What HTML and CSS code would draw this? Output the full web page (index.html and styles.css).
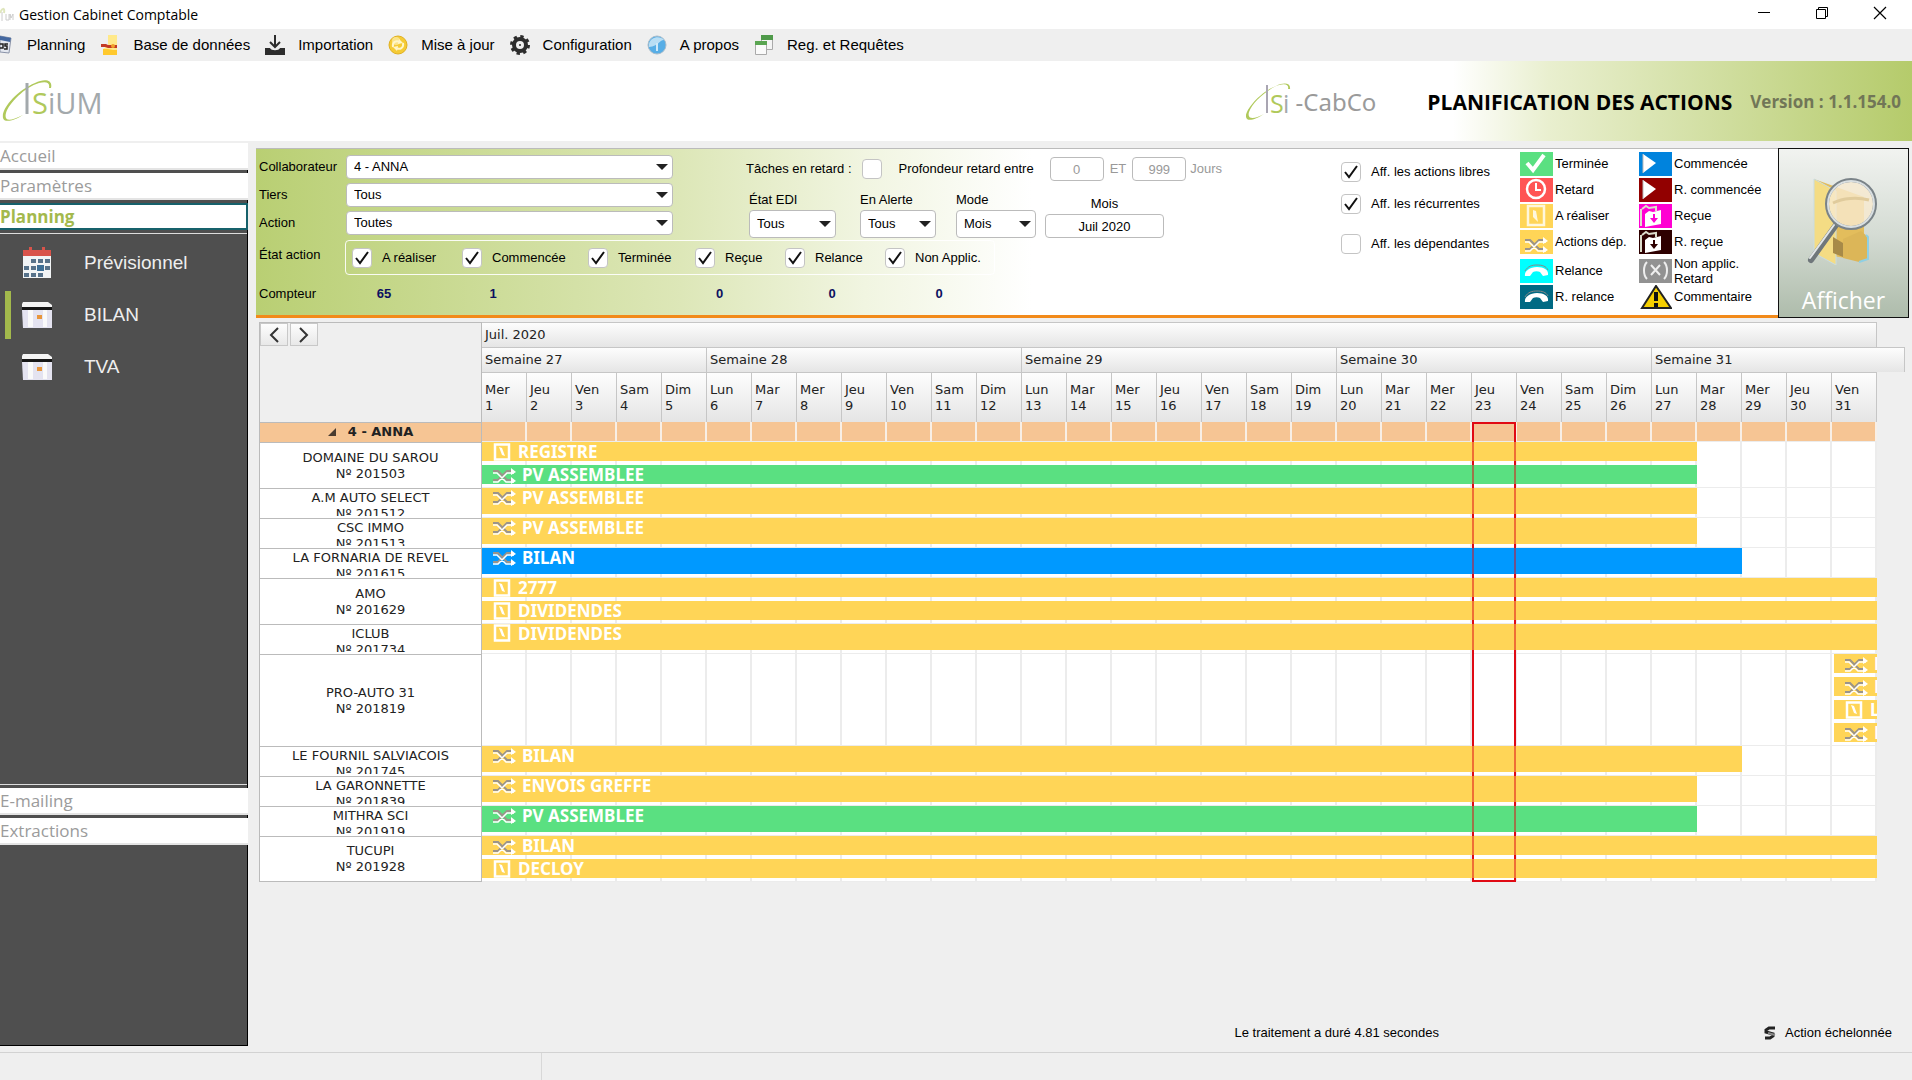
FILE: index.html
```html
<!DOCTYPE html>
<html lang="fr">
<head>
    <meta charset="UTF-8">
    <meta name="viewport" content="width=device-width, initial-scale=1.0">
    <title>Gestion Cabinet Comptable</title>
    <link rel="stylesheet" href="styles.css">
</head>
<body>
    <!-- Icônes partagées -->
    <svg class="sprite" aria-hidden="true">
        <symbol id="i-dep" viewBox="0 0 24 16">
            <path d="M1 3h5l9 9h7M1 12h5l9-9h7" fill="none" stroke="#9b948a" stroke-width="2"/>
            <path d="M1 5h4l9 9h8M1 14h5l9-9h7" fill="none" stroke="#fff" stroke-width="1.500"/>
            <path d="M19 0l5 4-5 3zM19 9l5 4-5 3z" fill="#fff"/>
        </symbol>
        <symbol id="i-todo" viewBox="0 0 20 18">
            <path d="M3 1.500h14v15H3z" fill="none" stroke="#fff" stroke-width="2.500"/>
            <path d="M7 4l3 1 3 8-3-1z" fill="#fff"/>
        </symbol>
        <symbol id="i-phone" viewBox="0 0 33 24">
            <path d="M5 17c-1-5 5-9 12-9s12 3 11 8l-5 1-3-4c-2-1-5-1-7 0l-3 4z" fill="#fff"/>
            <path d="M5 12c3-5 7-6 12-6s9 1 11 5" fill="none" stroke="#888" stroke-width="1"/>
        </symbol>
        <symbol id="i-play" viewBox="0 0 33 24">
            <path d="M4 2l13 9L4 21z" fill="#fff"/>
            <path d="M4 2v19" stroke="#bbb"/>
        </symbol>
        <symbol id="i-recu" viewBox="0 0 33 24">
            <path d="M2 22V5M3 5l4-3 3 2 7-1v4" fill="none" stroke="#ddc" stroke-width="2"/>
            <path d="M6 10l4-3 4 1 8-2v14l-16 3z" fill="#fff"/>
            <path d="M14 10v4h-3l4 5 4-5h-3v-4z" fill="currentColor"/>
        </symbol>
        <symbol id="i-box" viewBox="0 0 30 28">
            <path d="M1 1h25l4 3v2H0V3z" fill="#f4f4f4"/>
            <path d="M0 6h30v3H0z" fill="#161616"/>
            <path d="M0 9h30v18H1z" fill="#e4e3f0"/>
            <path d="M6 9h5v17H6zM21 9h4v17h-4z" fill="#fafafa"/>
            <path d="M15 14h5v4h-5z" fill="#e8963c"/>
        </symbol>
    </svg>

    <!-- Barre de titre -->
    <header class="titlebar">
        <svg class="titlebar-icon" width="14" height="20" viewBox="0 0 14 20" aria-hidden="true">
            <path d="M0 8c2-5 5-6 4 0" fill="none" stroke="#dfe6bd" stroke-width="2"/>
            <path d="M2 7v9M6 9v6h3V9M10 15V9l1 4 2-4v6" fill="none" stroke="#ccc" stroke-width="1"/>
        </svg>
        <h1 class="titlebar-text">Gestion Cabinet Comptable</h1>
        <div class="window-buttons">
            <button type="button" aria-label="Réduire"><svg width="14" height="14" viewBox="0 0 14 14"><path d="M1 6.500h12" stroke="#000"/></svg></button>
            <button type="button" aria-label="Restaurer"><svg width="14" height="14" viewBox="0 0 14 14"><path d="M1.500 3.500h9v9h-9zM3.500 3V1.500h9v9H11" fill="none" stroke="#000"/></svg></button>
            <button type="button" aria-label="Fermer"><svg width="14" height="14" viewBox="0 0 14 14"><path d="M1 1l12 12M13 1L1 13" stroke="#000" stroke-width="1.200"/></svg></button>
        </div>
    </header>

    <!-- Menu principal -->
    <nav class="menu">
        <a class="menu-item menu-first" href="#"><svg width="12" height="20" viewBox="0 0 12 20"><path d="M0 1l11 2-2 15-9-1z" fill="#e4e8f0" stroke="#8a93a8"/><path d="M0 1l11 2-1 4-10-2z" fill="#4468a0"/><path d="M0 9h3v4H0M8 9H5v2h2v3H4" fill="none" stroke="#222" stroke-width="1.500"/></svg>Planning</a>
        <a class="menu-item" href="#"><svg width="20" height="22" viewBox="0 0 20 22"><path d="M8 1h9v20H3v-6l5-4z" fill="#ffe98a"/><path d="M3 15h5l5 1h4v5H3z" fill="#ffc92e"/><path d="M1 10h5l2 1h9v3H8l-3-1H1z" fill="#c33a24"/><circle cx="13" cy="12" r="2" fill="#f0a02b"/></svg>Base de données</a>
        <a class="menu-item" href="#"><svg width="20" height="20" viewBox="0 0 20 20"><path d="M0 13h5c1 3 9 3 10 0h5v7H0z" fill="#2d2d2d"/><path d="M10 0v12M5 7l5 5 5-5" fill="none" stroke="#2d2d2d" stroke-width="2"/></svg>Importation</a>
        <a class="menu-item" href="#"><svg width="20" height="20" viewBox="0 0 20 20"><circle cx="10" cy="10" r="9" fill="#f5cb35" stroke="#e0b020"/><circle cx="8" cy="6" r="4" fill="#fbe48a"/><path d="M5 12c-1-5 3-7 7-5M15 8c1 5-3 7-7 5" fill="none" stroke="#fff6c8" stroke-width="2"/><path d="M11 4l4 4-5 1zM9 16l-4-4 5-1z" fill="#fff6c8"/></svg>Mise à jour</a>
        <a class="menu-item" href="#"><svg width="20" height="20" viewBox="0 0 20 20"><circle cx="10" cy="10" r="6" fill="none" stroke="#2d2d2d" stroke-width="4"/><circle cx="10" cy="10" r="8.500" fill="none" stroke="#2d2d2d" stroke-width="3" stroke-dasharray="3.300 3.380"/><circle cx="10" cy="10" r="1" fill="#2d2d2d"/></svg>Configuration</a>
        <a class="menu-item" href="#"><svg width="20" height="20" viewBox="0 0 20 20"><circle cx="10" cy="10" r="9" fill="#58aee6" stroke="#a8bccb"/><path d="M2 9C3 2 13 0 17 5 12 5 12 11 2 12z" fill="#b9def4"/><path d="M10 8v8" stroke="#cfe9f9" stroke-width="2"/></svg>A propos</a>
        <a class="menu-item" href="#"><svg width="20" height="20" viewBox="0 0 20 20"><path d="M7.500 1.500h11v13h-11z" fill="#f4f4f4" stroke="#aaa"/><path d="M7 0h12v5H7z" fill="#4f9a4a"/><path d="M1.500 6.500h11v13h-11z" fill="#fafafa" stroke="#aaa"/><path d="M1 6h12v4H1z" fill="#5aa551"/></svg>Reg. et Requêtes</a>
    </nav>

    <!-- Bandeau -->
    <div class="banner">
        <svg class="logo" width="104" height="44" viewBox="0 0 104 44" role="img" aria-label="Isium">
            <path d="M51 9C53 1 45-1 35 4 18 11 1 29 3 39c1 5 11 3 20-3C9 43 4 42 6 34 9 24 25 8 39 4c8-2 11 0 10 5z" fill="#b0c95b"/>
            <path d="M27 4v31" stroke="#a3a9ac" stroke-width="3"/>
            <text x="32" y="35" class="logo-letter logo-green">S</text>
            <text x="48" y="35" class="logo-letter">iUM</text>
        </svg>
        <div class="banner-right">
            <div class="product">
                <svg width="48" height="40" viewBox="0 0 48 40" role="img" aria-label="Isi">
                    <path d="M45 7c1-6-6-7-14-3C17 9 0 27 1 35c1 5 9 3 18-3C8 38 2 37 4 30 7 21 22 7 34 3c7-2 10 0 9 4z" fill="#b0c95b"/>
                    <path d="M22 3v28" stroke="#a9a5b2" stroke-width="2"/>
                    <text x="25" y="31" class="product-letter logo-green">S</text>
                    <text x="38" y="31" class="product-letter">i</text>
                </svg>
                <span class="product-name">-CabCo</span>
            </div>
            <h2 class="banner-title">PLANIFICATION DES ACTIONS</h2>
            <span class="version">Version : 1.1.154.0</span>
        </div>
    </div>

    <div class="layout">
        <!-- Menu latéral -->
        <aside class="sidebar">
            <a class="side-head" href="#">Accueil</a>
            <a class="side-head" href="#">Paramètres</a>
            <a class="side-head active" href="#">Planning</a>
            <nav class="side-list">
                <a class="side-item" href="#">
                    <svg width="30" height="32" viewBox="0 0 30 32"><path d="M1 6h28v25H1z" fill="#f2f4f5"/><path d="M1 3h6V0h3v3h10V0h3v3h6v6H1z" fill="#d9534a"/><path d="M9 12h5v4H9zM16 12h5v4h-5zM23 12h5v4h-5zM2 19h5v4H2zM9 19h5v4H9zM23 19h5v4h-5zM2 26h5v4H2zM9 26h5v4H9zM16 26h5v4h-5z" fill="#57728a"/><path d="M15 18h7v6h-7z" fill="#3d6f96"/></svg>
                    Prévisionnel
                </a>
                <a class="side-item selected" href="#"><svg width="30" height="28"><use href="#i-box"/></svg>BILAN</a>
                <a class="side-item" href="#"><svg width="30" height="28"><use href="#i-box"/></svg>TVA</a>
            </nav>
            <a class="side-head" href="#">E-mailing</a>
            <a class="side-head" href="#">Extractions</a>
            <div class="side-rest"></div>
        </aside>

        <main class="content">
            <!-- Filtres -->
            <section class="filters">
                <form class="filter-panel">
                    <div class="filter-form">
                        <div class="form-top">
                            <div class="fields">
                                <label for="collaborateur">Collaborateur</label>
                                <select id="collaborateur"><option>4 - ANNA</option></select>
                                <label for="tiers">Tiers</label>
                                <select id="tiers"><option>Tous</option></select>
                                <label for="action">Action</label>
                                <select id="action"><option>Toutes</option></select>
                            </div>
                            <div class="criteria">
                                <div class="late">
                                    <label for="retard">Tâches en retard :</label>
                                    <input type="checkbox" id="retard">
                                    <label class="depth" for="de">Profondeur retard entre</label>
                                    <input type="text" id="de" value="0" disabled>
                                    <label class="muted" for="a">ET</label>
                                    <input type="text" id="a" value="999" disabled>
                                    <span class="muted days">Jours</span>
                                </div>
                                <div class="modes">
                                    <div class="mode"><label for="edi">État EDI</label><select id="edi"><option>Tous</option></select></div>
                                    <div class="mode"><label for="alerte">En Alerte</label><select id="alerte"><option>Tous</option></select></div>
                                    <div class="mode"><label for="mode">Mode</label><select id="mode"><option>Mois</option></select></div>
                                    <div class="mode month"><label for="mois">Mois</label><input type="text" id="mois" value="Juil 2020"></div>
                                </div>
                            </div>
                        </div>
                        <div class="state-row">
                            <span class="state-title">État action</span>
                            <div class="states">
                                <label class="check"><input type="checkbox" checked>A réaliser</label>
                                <label class="check"><input type="checkbox" checked>Commencée</label>
                                <label class="check"><input type="checkbox" checked>Terminée</label>
                                <label class="check"><input type="checkbox" checked>Reçue</label>
                                <label class="check"><input type="checkbox" checked>Relance</label>
                                <label class="check"><input type="checkbox" checked>Non Applic.</label>
                            </div>
                        </div>
                        <div class="counters">
                            <span class="counter-title">Compteur</span>
                            <b>65</b><b>1</b><b></b><b>0</b><b>0</b><b>0</b>
                        </div>
                    </div>

                    <div class="display-options">
                        <label class="check"><input type="checkbox" checked>Aff. les actions libres</label>
                        <label class="check"><input type="checkbox" checked>Aff. les récurrentes</label>
                        <label class="check check-last"><input type="checkbox">Aff. les dépendantes</label>
                    </div>

                    <!-- Légende -->
                    <ul class="legend">
                        <li><svg class="tile green" viewBox="0 0 33 24"><path d="M7 11l6 7L24 3" fill="none" stroke="#fff" stroke-width="4"/></svg>Terminée</li>
                        <li><svg class="tile blue"><use href="#i-play"/></svg>Commencée</li>
                        <li><svg class="tile red" viewBox="0 0 33 24"><circle cx="16" cy="11" r="9" fill="none" stroke="#fff" stroke-width="2.500"/><path d="M16 5v7h5" fill="none" stroke="#fff" stroke-width="2"/></svg>Retard</li>
                        <li><svg class="tile darkred"><use href="#i-play"/></svg>R. commencée</li>
                        <li><svg class="tile yellow" viewBox="0 0 33 24"><path d="M8 2h16v19H8z" fill="none" stroke="#fff7dc" stroke-width="2.500"/><path d="M13 6l3 1 2 11-5-5z" fill="#fff7dc"/></svg>A réaliser</li>
                        <li><svg class="tile pink"><use href="#i-recu"/></svg>Reçue</li>
                        <li><svg class="tile yellow" viewBox="-4 -7 33 24"><use href="#i-dep" width="24" height="16"/></svg>Actions dép.</li>
                        <li><svg class="tile brown"><use href="#i-recu"/></svg>R. reçue</li>
                        <li><svg class="tile cyan"><use href="#i-phone"/></svg>Relance</li>
                        <li><svg class="tile grey" viewBox="0 0 33 24"><path d="M8 3C4 7 4 16 8 20M25 3c4 4 4 13 0 17M12 6l9 10M21 6l-9 10" fill="none" stroke="#eee" stroke-width="2"/></svg><span>Non applic.<br>Retard</span></li>
                        <li><svg class="tile teal"><use href="#i-phone"/></svg>R. relance</li>
                        <li><svg class="tile" viewBox="0 0 33 24"><path d="M3 23L17 1l15 22z" fill="#f5cf00" stroke="#222" stroke-width="2"/><path d="M17 7v9M17 18v4" stroke="#111" stroke-width="4"/></svg>Commentaire</li>
                    </ul>
                </form>
                <button type="button" class="show-button">
                    <svg width="78" height="88" viewBox="0 0 78 88" aria-hidden="true">
                        <path d="M9 2l50 18v64l-50-8z" fill="#e3bd5c"/>
                        <path d="M9 2l22 12v74L9 76z" fill="#f4dc84" stroke="#c9dce0"/>
                        <path d="M28 60l10 6v14l-10-4z" fill="#a78a48"/>
                        <path d="M38 62l18-8 7 6v22l-9 3-16-4z" fill="#dcb658"/>
                        <path d="M61 58l2 2v22l-9 3" fill="none" stroke="#8fd0e4" stroke-width="2"/>
                        <path d="M6 83l25-35" stroke="#6f777b" stroke-width="6" stroke-linecap="round"/>
                        <path d="M5 81l24-33" stroke="#e2e6e7" stroke-width="2" stroke-linecap="round"/>
                        <circle cx="46" cy="27" r="24" fill="#f8ead0" fill-opacity="0.800" stroke="#7a8388" stroke-width="4"/>
                        <circle cx="46" cy="27" r="23" fill="none" stroke="#d9dfe1" stroke-width="2"/>
                        <path d="M28 26c10-5 24-6 36-3" fill="none" stroke="#e0cb9c" stroke-width="3"/>
                    </svg>
                    <span>Afficher</span>
                </button>
            </section>

            <!-- Planning du mois -->
            <div class="planning">
                <table class="gantt">
                    <colgroup><col class="col-name"><col span="31"><col class="col-end"></colgroup>
                    <thead>
                        <tr class="row-month">
                            <td class="corner" rowspan="3">
                                <div class="pager">
                                    <button type="button" aria-label="Précédent"><svg width="10" height="16" viewBox="0 0 10 16"><path d="M9 1L2 8l7 7" fill="none" stroke="#333" stroke-width="2"/></svg></button>
                                    <button type="button" aria-label="Suivant"><svg width="10" height="16" viewBox="0 0 10 16"><path d="M1 1l7 7-7 7" fill="none" stroke="#333" stroke-width="2"/></svg></button>
                                </div>
                            </td>
                            <th colspan="31">Juil. 2020</th>
                            <td></td>
                        </tr>
                        <tr class="row-week">
                            <th colspan="5">Semaine 27</th>
                            <th colspan="7">Semaine 28</th>
                            <th colspan="7">Semaine 29</th>
                            <th colspan="7">Semaine 30</th>
                            <th colspan="6">Semaine 31</th>
                        </tr>
                        <tr class="row-day">
                            <th>Mer<br>1</th><th>Jeu<br>2</th><th>Ven<br>3</th><th>Sam<br>4</th><th>Dim<br>5</th>
                            <th>Lun<br>6</th><th>Mar<br>7</th><th>Mer<br>8</th><th>Jeu<br>9</th><th>Ven<br>10</th><th>Sam<br>11</th><th>Dim<br>12</th>
                            <th>Lun<br>13</th><th>Mar<br>14</th><th>Mer<br>15</th><th>Jeu<br>16</th><th>Ven<br>17</th><th>Sam<br>18</th><th>Dim<br>19</th>
                            <th>Lun<br>20</th><th>Mar<br>21</th><th>Mer<br>22</th><th>Jeu<br>23</th><th>Ven<br>24</th><th>Sam<br>25</th><th>Dim<br>26</th>
                            <th>Lun<br>27</th><th>Mar<br>28</th><th>Mer<br>29</th><th>Jeu<br>30</th><th>Ven<br>31</th>
                            <td></td>
                        </tr>
                    </thead>
                    <tbody>
                        <tr class="group">
                            <th><svg width="8" height="8" viewBox="0 0 8 8"><path d="M8 0v8H0z" fill="#4a3c30"/></svg>4 - ANNA</th>
                            <td class="track" colspan="31"></td>
                        </tr>
                        <tr>
                            <th><div class="name">DOMAINE DU SAROU<br>Nº 201503</div></th>
                            <td class="track" colspan="31">
                                <div class="bar todo" style="width: calc(100% * 27 / 31)"><svg class="ico-todo"><use href="#i-todo"/></svg>REGISTRE</div>
                                <div class="bar done" style="width: calc(100% * 27 / 31)"><svg class="ico-dep"><use href="#i-dep"/></svg>PV ASSEMBLEE</div>
                            </td>
                        </tr>
                        <tr class="single">
                            <th><div class="name">A.M AUTO SELECT<br>Nº 201512</div></th>
                            <td class="track" colspan="31"><div class="bar todo" style="width: calc(100% * 27 / 31)"><svg class="ico-dep"><use href="#i-dep"/></svg>PV ASSEMBLEE</div></td>
                        </tr>
                        <tr class="single">
                            <th><div class="name">CSC IMMO<br>Nº 201513</div></th>
                            <td class="track" colspan="31"><div class="bar todo" style="width: calc(100% * 27 / 31)"><svg class="ico-dep"><use href="#i-dep"/></svg>PV ASSEMBLEE</div></td>
                        </tr>
                        <tr class="single">
                            <th><div class="name">LA FORNARIA DE REVEL<br>Nº 201615</div></th>
                            <td class="track" colspan="31"><div class="bar started" style="width: calc(100% * 28 / 31)"><svg class="ico-dep"><use href="#i-dep"/></svg>BILAN</div></td>
                        </tr>
                        <tr>
                            <th><div class="name">AMO<br>Nº 201629</div></th>
                            <td class="track" colspan="31">
                                <div class="bar todo"><svg class="ico-todo"><use href="#i-todo"/></svg>2777</div>
                                <div class="bar todo"><svg class="ico-todo"><use href="#i-todo"/></svg>DIVIDENDES</div>
                            </td>
                        </tr>
                        <tr class="single">
                            <th><div class="name">ICLUB<br>Nº 201734</div></th>
                            <td class="track" colspan="31"><div class="bar todo"><svg class="ico-todo"><use href="#i-todo"/></svg>DIVIDENDES</div></td>
                        </tr>
                        <tr>
                            <th><div class="name">PRO-AUTO 31<br>Nº 201819</div></th>
                            <td class="track" colspan="31">
                                <div class="bar todo clipped" style="margin-left: calc(100% * 30 / 31 + 2px)"><svg class="ico-dep"><use href="#i-dep"/></svg>P</div>
                                <div class="bar todo clipped" style="margin-left: calc(100% * 30 / 31 + 2px)"><svg class="ico-dep"><use href="#i-dep"/></svg>E</div>
                                <div class="bar todo clipped" style="margin-left: calc(100% * 30 / 31 + 2px)"><svg class="ico-todo"><use href="#i-todo"/></svg>L</div>
                                <div class="bar todo clipped" style="margin-left: calc(100% * 30 / 31 + 2px)"><svg class="ico-dep"><use href="#i-dep"/></svg>E</div>
                            </td>
                        </tr>
                        <tr class="single">
                            <th><div class="name">LE FOURNIL SALVIACOIS<br>Nº 201745</div></th>
                            <td class="track" colspan="31"><div class="bar todo" style="width: calc(100% * 28 / 31)"><svg class="ico-dep"><use href="#i-dep"/></svg>BILAN</div></td>
                        </tr>
                        <tr class="single">
                            <th><div class="name">LA GARONNETTE<br>Nº 201839</div></th>
                            <td class="track" colspan="31"><div class="bar todo" style="width: calc(100% * 27 / 31)"><svg class="ico-dep"><use href="#i-dep"/></svg>ENVOIS GREFFE</div></td>
                        </tr>
                        <tr class="single">
                            <th><div class="name">MITHRA SCI<br>Nº 201919</div></th>
                            <td class="track" colspan="31"><div class="bar done" style="width: calc(100% * 27 / 31)"><svg class="ico-dep"><use href="#i-dep"/></svg>PV ASSEMBLEE</div></td>
                        </tr>
                        <tr>
                            <th><div class="name">TUCUPI<br>Nº 201928</div></th>
                            <td class="track" colspan="31">
                                <div class="bar todo"><svg class="ico-dep"><use href="#i-dep"/></svg>BILAN</div>
                                <div class="bar todo"><svg class="ico-todo"><use href="#i-todo"/></svg>DECLOY</div>
                            </td>
                        </tr>
                    </tbody>
                </table>
            </div>

            <div class="content-footer">
                <span class="duration">Le traitement a duré 4.81 secondes</span>
                <span class="staggered">
                    <svg width="12" height="14" viewBox="0 0 12 14" aria-hidden="true"><path d="M11 2H5L2 4v2l7 2v2l-3 2H1" fill="none" stroke="#222" stroke-width="3"/><path d="M4 7l7 2" stroke="#888" stroke-width="2"/></svg>
                    Action échelonnée
                </span>
            </div>
        </main>
    </div>

    <footer class="statusbar"><div class="status-cell"></div></footer>
</body>
</html>
```
FILE: styles.css
```css
*,
*::before,
*::after {
    box-sizing: border-box;
}

body {
    margin: 0;
    min-height: 100vh;
    display: flex;
    flex-direction: column;
    background-color: #efefef;
    color: #000;
    font-family: "Liberation Sans", Arial, sans-serif;
    font-size: 13px;
    line-height: 16px;
}

a {
    color: inherit;
    text-decoration: none;
}

button, input, select {
    font: inherit;
    color: inherit;
    margin: 0;
}

svg {
    flex-shrink: 0;
}

.sprite {
    display: none;
}

/* Barre de titre */
.titlebar {
    display: flex;
    align-items: center;
    height: 29px;
    background-color: #fff;
}

.titlebar-text {
    margin: 0 0 0 5px;
    font-family: "Open Sans", sans-serif;
    font-size: 14px;
    font-weight: normal;
}

.window-buttons {
    display: flex;
    margin-left: auto;
    padding-right: 3px;
}

.window-buttons button {
    width: 58px;
    height: 29px;
    padding: 0;
    border: none;
    background: none;
}

/* Menu */
.menu {
    display: flex;
    align-items: center;
    gap: 15px;
    height: 32px;
    font-size: 15px;
}

.menu-item {
    display: flex;
    align-items: center;
    gap: 13px;
}

.menu-first {
    gap: 15px;
}

/* Bandeau */
.banner {
    display: flex;
    align-items: center;
    justify-content: space-between;
    height: 80px;
    background: linear-gradient(to right, #fff 76%, #e9efcf 81%, #b5cb6b 100%);
}

.logo-letter,
.product-letter {
    font-family: "Open Sans", sans-serif;
    font-size: 29px;
    fill: #a3a9ac;
}

.product-letter {
    font-size: 25px;
}

.logo-green {
    fill: #b0c95b;
}

.banner-right {
    display: flex;
    align-items: center;
    padding: 2px 11px 0 0;
    font-family: "Open Sans", sans-serif;
}

.product {
    display: flex;
    align-items: center;
    gap: 3px;
}

.product-name {
    color: #9a9a9a;
    font-family: "Noto Sans", sans-serif;
    font-size: 24px;
}

.banner-title {
    margin: 0 18px 0 51px;
    font-size: 21px;
    line-height: 28px;
}

.version {
    color: #717657;
    font-size: 17px;
    font-weight: bold;
}

/* Structure */
.layout {
    flex: 1;
    display: flex;
    gap: 8px;
}

.sidebar {
    width: 248px;
    flex-shrink: 0;
    display: flex;
    flex-direction: column;
    gap: 3px;
    margin: 2px 0 6px;
    background-color: #4f4f4f;
    border-right: 1px solid #000;
    border-bottom: 1px solid #000;
}

.side-head {
    height: 27px;
    margin-right: -1px;
    background-color: #fff;
    border-bottom: 2px solid #e4e4e4;
    color: #9b9b9b;
    font-family: "Open Sans", sans-serif;
    font-size: 17px;
    line-height: 26px;
}

.side-head.active {
    border: 2px solid #16616b;
    border-left: none;
    color: #a3b94c;
    font-weight: bold;
    line-height: 24px;
}

.side-list {
    flex: 1;
    padding-top: 3px;
    border-top: 1px solid #ddd;
    border-bottom: 1px solid #ddd;
}

.side-item {
    display: flex;
    align-items: center;
    gap: 32px;
    height: 52px;
    padding-left: 22px;
    color: #eee;
    font-size: 19px;
}

.side-item.selected {
    height: 48px;
    margin: 2px 0 2px 5px;
    padding-left: 11px;
    border-left: 6px solid #a3b94c;
}

.side-rest {
    height: 197px;
}

.content {
    flex: 1;
    min-width: 0;
    display: flex;
    flex-direction: column;
    padding-top: 7px;
}

/* Filtres */
.filters {
    display: flex;
    padding-right: 3px;
}

.filter-panel {
    flex: 1;
    display: flex;
    margin: 0;
    padding-left: 3px;
    border-top: 1px solid #bbb;
    border-bottom: 3px solid #f28a1a;
    background: linear-gradient(to right, #b9cf73 0, #dde7b8 28%, #f1f5e1 40%, #fff 51%);
}

.filter-form {
    flex: 1;
    padding-top: 5px;
}

.form-top {
    display: flex;
    gap: 73px;
}

.fields {
    display: grid;
    grid-template-columns: 87px 327px;
    row-gap: 4px;
    align-content: start;
    align-items: center;
    padding-top: 1px;
}

select,
input[type="text"] {
    height: 24px;
    padding: 0 7px;
    border: 1px solid #bbb;
    border-radius: 4px;
    background-color: #fff;
    outline: none;
}

select {
    appearance: none;
    background-image: url("data:image/svg+xml,%3Csvg xmlns='http://www.w3.org/2000/svg' width='12' height='6'%3E%3Cpath d='M0 0h12L6 6z' fill='%23222'/%3E%3C/svg%3E");
    background-repeat: no-repeat;
    background-position: right 4px center;
}

input[type="text"] {
    text-align: center;
}

input[type="text"]:disabled {
    color: #999;
}

input[type="checkbox"] {
    appearance: none;
    width: 20px;
    height: 20px;
    border: 1px solid #c4c4c4;
    border-radius: 4px;
    background-color: #fff;
    flex-shrink: 0;
}

input[type="checkbox"]:checked {
    background-image: url("data:image/svg+xml,%3Csvg xmlns='http://www.w3.org/2000/svg' width='14' height='14'%3E%3Cpath d='M1 7l4 5L13 1' fill='none' stroke='%23111' stroke-width='2'/%3E%3C/svg%3E");
    background-repeat: no-repeat;
    background-position: center;
}

.late {
    display: flex;
    align-items: center;
    gap: 6px;
    padding-top: 3px;
}

.late input[type="checkbox"] {
    margin-left: 4px;
}

.depth {
    margin: 0 10px 0 11px;
}

.late input[type="text"] {
    width: 54px;
}

.muted {
    color: #999;
}

.days {
    margin-left: -2px;
}

.modes {
    display: flex;
    align-items: flex-end;
    padding: 11px 0 0 3px;
}

.mode {
    display: flex;
    flex-direction: column;
    gap: 2px;
    width: 87px;
    margin-right: 24px;
}

.mode + .mode {
    width: 76px;
    margin-right: 20px;
}

.mode + .mode + .mode {
    width: 80px;
    margin-right: 9px;
}

.mode select {
    height: 28px;
}

.mode + .mode + .month {
    width: 119px;
    margin: 0;
    text-align: center;
}

.check {
    display: flex;
    align-items: center;
    gap: 10px;
    white-space: nowrap;
}

.state-row {
    display: grid;
    grid-template-columns: 86px 650px;
    margin-top: 2px;
}

.state-title {
    padding-top: 7px;
}

.states {
    display: grid;
    grid-template-columns: 110px 126px 107px 90px 100px auto;
    height: 35px;
    padding-left: 6px;
    border: 1px solid rgba(255, 255, 255, 0.9);
    border-radius: 4px;
}

.counters {
    display: grid;
    grid-template-columns: 70px 110px 108px 116px 113px 112px 102px;
    padding: 11px 0 13px;
    text-align: center;
}

.counter-title {
    text-align: left;
}

.counters b {
    color: #0c1060;
}

.display-options {
    width: 179px;
    padding-top: 13px;
}

.display-options .check {
    margin-bottom: 12px;
}

.display-options .check-last {
    margin-top: 20px;
}

/* Légende */
.legend {
    display: grid;
    grid-template-columns: 119px 139px;
    grid-template-rows: 26px 26px 26px 29px 26px 24px;
    margin: 0;
    padding: 3px 0 0;
    list-style: none;
}

.legend li {
    display: flex;
    align-items: flex-start;
    gap: 2px;
    height: 24px;
    line-height: 24px;
    white-space: nowrap;
}

.legend li span {
    line-height: 15px;
    margin-top: -3px;
}

.tile {
    width: 33px;
    height: 24px;
}

.green { background-color: #5ae081; }
.blue { background-color: #0083dd; }
.red { background-color: #ff5454; }
.darkred { background-color: #920000; }
.yellow { background-color: #ffd557; }
.pink { background-color: #ff00d2; color: #ff00d2; }
.brown { background-color: #2e0000; color: #2e0000; }
.cyan { background-color: #00ffff; }
.grey { background-color: #929292; }
.teal { background-color: #006a84; }

.pink,
.brown {
    margin-right: 0;
}

.show-button {
    display: flex;
    flex-direction: column;
    align-items: center;
    justify-content: space-between;
    width: 131px;
    padding: 28px 0 0;
    border: 1px solid #111;
    background: linear-gradient(#f1f3f0, #d5dcd4 50%, #aebcab);
    color: #fff;
    font-family: "Open Sans", sans-serif;
    font-size: 23px;
    line-height: 34px;
}

/* Planning */
.planning {
    position: relative;
    margin: 4px 7px 0 3px;
}

/* Jour courant : un cadre plein sous les barres, un second atténué au-dessus */
.planning::before,
.planning::after {
    content: "";
    position: absolute;
    z-index: 1;
    top: 100px;
    bottom: 0;
    left: calc(223px + (100% - 251px) * 22 / 31);
    width: calc((100% - 251px) / 31 - 1px);
    border: 2px solid #e00a14;
    pointer-events: none;
}

.planning::after {
    z-index: 3;
    opacity: 0.5;
}

.gantt {
    width: 100%;
    table-layout: fixed;
    border-collapse: separate;
    border-spacing: 0;
    color: #222;
    font-family: "DejaVu Sans", Verdana, sans-serif;
}

.gantt th,
.gantt td {
    padding: 0;
    font-weight: normal;
}

.col-name {
    width: 223px;
}

.col-end {
    width: 28px;
}

.gantt thead th {
    padding-left: 3px;
    border-top: 1px solid #c6c6c6;
    border-right: 1px solid #c6c6c6;
    background: linear-gradient(#fdfdfd, #e5e5e5);
    text-align: left;
}

.row-month,
.row-week {
    height: 25px;
}

.row-day {
    height: 50px;
}

.gantt .corner {
    border: 1px solid #bbb;
    border-bottom: none;
    vertical-align: top;
}

.pager {
    display: flex;
    gap: 2px;
}

.pager button {
    display: flex;
    align-items: center;
    justify-content: center;
    width: 28px;
    height: 23px;
    padding: 0;
    border: 1px solid #c8c8c8;
    background: linear-gradient(#fdfdfd, #e8e8e8);
}

.gantt tbody th {
    border: 1px solid #bbb;
    border-bottom: none;
    background-color: #fff;
    text-align: center;
}

.gantt tbody tr:last-child th {
    border-bottom: 1px solid #bbb;
}

.gantt .group th {
    height: 20px;
    padding-bottom: 2px;
    background-color: #f6c594;
    font-weight: bold;
}

.group svg {
    margin-right: 12px;
}

.single .name {
    height: 27px;
    margin-bottom: 2px;
    padding-top: 1px;
    overflow: hidden;
}

.gantt .track {
    border-bottom: 1px solid #ececec;
    background: #fff linear-gradient(to left, #ececec 2px, transparent 2px) left top / calc(100% / 31) 100%;
    vertical-align: top;
}

.gantt .group .track {
    background: #f6c594 linear-gradient(to left, #f8efe6 2px, transparent 2px) left top / calc(100% / 31) 100%;
}

.bar {
    position: relative;
    z-index: 2;
    display: flex;
    align-items: center;
    height: 19px;
    margin-bottom: 4px;
    padding-left: 10px;
    gap: 6px;
    color: #fff;
    font-family: "Noto Sans", sans-serif;
    font-size: 17px;
    font-weight: bold;
    line-height: 19px;
}

.track .bar:last-child {
    margin-bottom: 3px;
}

.single .bar {
    height: 26px;
    align-items: flex-start;
}

.clipped {
    overflow: hidden;
}

.todo {
    background-color: #ffd557;
}

.done {
    background-color: #5ae081;
}

.started {
    background-color: #0099ff;
}

.ico-dep {
    width: 24px;
    height: 16px;
    margin-top: 2px;
}

.ico-todo {
    width: 20px;
    height: 18px;
}

/* Bas de page */
.content-footer {
    display: flex;
    align-items: center;
    justify-content: flex-end;
    gap: 325px;
    margin-top: auto;
    padding: 0 20px 11px 0;
}

.staggered {
    display: flex;
    align-items: center;
    gap: 9px;
}

.statusbar {
    height: 28px;
    border-top: 1px solid #d2d2d2;
}

.status-cell {
    width: 542px;
    height: 100%;
    border-right: 1px solid #d8d8d8;
}
```
